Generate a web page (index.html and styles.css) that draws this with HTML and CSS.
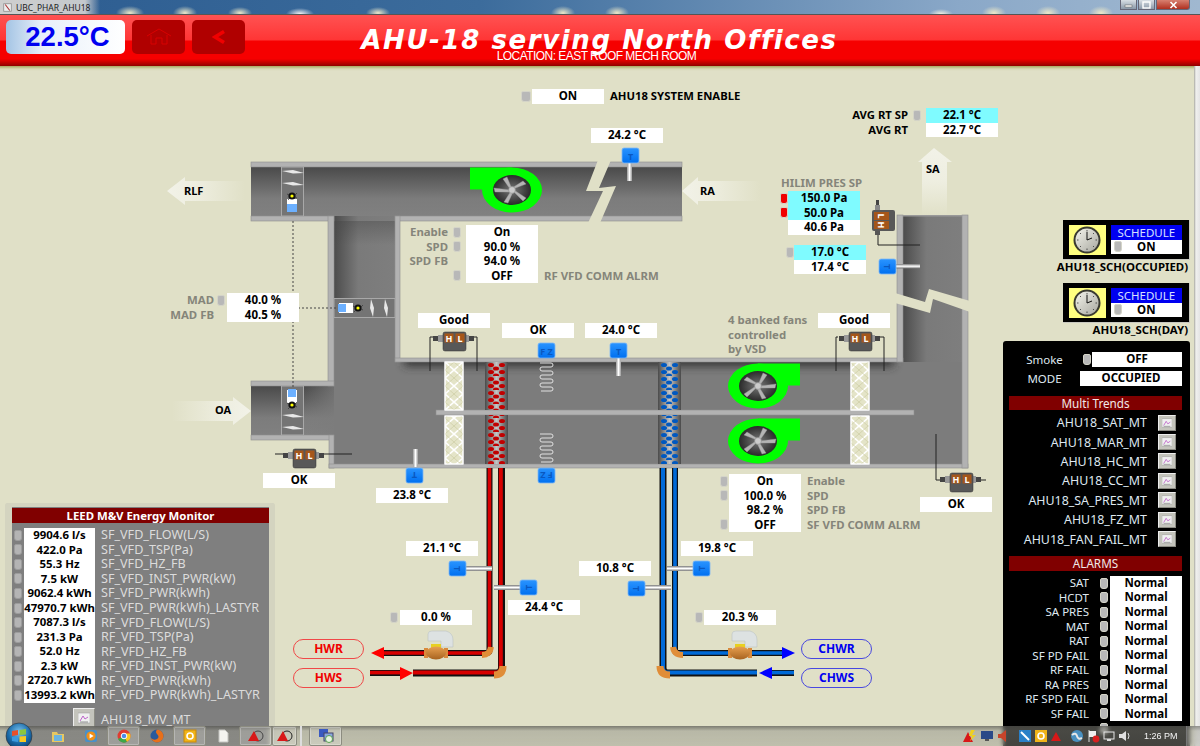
FILE: index.html
```html
<!DOCTYPE html>
<html lang="en">
<head>
    <meta charset="UTF-8">
    <title>UBC_PHAR_AHU18</title>
    <link rel="stylesheet" href="styles.css">
</head>
<body>
<div class="titlebar">
    <svg class="win-ico" viewBox="0 0 12 12"><rect x="1" y="1" width="10" height="10" fill="#eee" stroke="#888"/><path d="M3 2 L9 10" stroke="#a33" stroke-width="1.5"/></svg>
    <span>UBC_PHAR_AHU18</span>
    <div class="win-btns">
        <div class="win-btn"><svg width="9" height="7" viewBox="0 0 9 7"><rect x="1" y="4" width="7" height="2" fill="#fff" stroke="#555" stroke-width=".5"/></svg></div>
        <div class="win-btn"><svg width="9" height="8" viewBox="0 0 9 8"><rect x="1" y="1" width="7" height="6" fill="none" stroke="#fff" stroke-width="1.4"/></svg></div>
        <div class="win-btn close"><svg width="9" height="8" viewBox="0 0 9 8"><path d="M1.5 1 L7.5 7 M7.5 1 L1.5 7" stroke="#fff" stroke-width="1.6"/></svg></div>
    </div>
</div>

<div class="header">
    <div class="temp-box">22.5°C</div>
    <div class="head-btn">
        <svg width="26" height="18" viewBox="0 0 26 18"><path d="M1 8 L13 1 L25 8 M5 7 V16 H10 V10 H16 V16 H21 V7" fill="none" stroke="#d80000" stroke-width="1"/></svg>
    </div>
    <div class="head-btn">
        <svg width="14" height="14" viewBox="0 0 14 14"><path d="M12 1.5 L3 7 L12 12.5" fill="none" stroke="#f00000" stroke-width="3.5"/></svg>
    </div>
    <div class="head-title">
        <h1>AHU-18 serving North Offices</h1>
        <div class="location">LOCATION: EAST ROOF MECH ROOM</div>
    </div>
</div>

<div class="canvas">
    <svg class="plant" width="1200" height="680" viewBox="0 66 1200 680">
        <defs>
            <linearGradient id="ductTop" x1="0" y1="0" x2="0" y2="1">
                <stop offset="0" stop-color="#4a4a4a"/><stop offset=".65" stop-color="#7c7c7c"/><stop offset="1" stop-color="#808080"/>
            </linearGradient>
            <linearGradient id="ductLeft" x1="0" y1="0" x2="1" y2="0">
                <stop offset="0" stop-color="#4c4c4c"/><stop offset=".4" stop-color="#7a7a7a"/><stop offset="1" stop-color="#7e7e7e"/>
            </linearGradient>
            <linearGradient id="shadow" x1="0" y1="0" x2="0" y2="1">
                <stop offset="0" stop-color="#444" stop-opacity=".8"/><stop offset="1" stop-color="#444" stop-opacity="0"/>
            </linearGradient>
            <linearGradient id="oaFade" x1="0" y1="0" x2="1" y2="0">
                <stop offset="0" stop-color="#7c7c7c" stop-opacity="0"/><stop offset="1" stop-color="#7c7c7c"/>
            </linearGradient>
            <linearGradient id="coilBg" x1="0" y1="0" x2="1" y2="0">
                <stop offset="0" stop-color="#4a4a4a"/><stop offset=".5" stop-color="#c4c4c4"/><stop offset="1" stop-color="#4a4a4a"/>
            </linearGradient>
            <linearGradient id="blueBox" x1="0" y1="0" x2="0" y2="1">
                <stop offset="0" stop-color="#2a94ff"/><stop offset="1" stop-color="#0070f0"/>
            </linearGradient>
            <linearGradient id="stickV" x1="0" y1="0" x2="1" y2="0">
                <stop offset="0" stop-color="#999"/><stop offset=".5" stop-color="#fff"/><stop offset="1" stop-color="#999"/>
            </linearGradient>
            <linearGradient id="stickH" x1="0" y1="0" x2="0" y2="1">
                <stop offset="0" stop-color="#777"/><stop offset=".5" stop-color="#fff"/><stop offset="1" stop-color="#777"/>
            </linearGradient>
            <linearGradient id="fadeRightward" x1="0" y1="0" x2="1" y2="0">
                <stop offset="0" stop-color="#f2f2e8"/><stop offset=".35" stop-color="#eeeee0"/><stop offset="1" stop-color="#e0e0c7"/>
            </linearGradient>
            <linearGradient id="fadeLeftward" x1="1" y1="0" x2="0" y2="0">
                <stop offset="0" stop-color="#f2f2e8"/><stop offset=".35" stop-color="#eeeee0"/><stop offset="1" stop-color="#e0e0c7"/>
            </linearGradient>
            <linearGradient id="fadeDown" x1="0" y1="0" x2="0" y2="1">
                <stop offset="0" stop-color="#f2f2e8"/><stop offset=".5" stop-color="#eeeee0"/><stop offset="1" stop-color="#e0e0c7"/>
            </linearGradient>
            <radialGradient id="eye" cx=".5" cy=".5" r=".5">
                <stop offset="0" stop-color="#777"/><stop offset="1" stop-color="#2a2a2a"/>
            </radialGradient>
            <linearGradient id="brass" x1="0" y1="0" x2="0" y2="1">
                <stop offset="0" stop-color="#e8a050"/><stop offset="1" stop-color="#a86420"/>
            </linearGradient>
            <filter id="soft" x="-30%" y="-100%" width="160%" height="300%"><feGaussianBlur stdDeviation="5"/></filter>
            <pattern id="lattice" x="445" y="362" width="18" height="16" patternUnits="userSpaceOnUse">
                <path d="M0 0 L18 16 M18 0 L0 16" stroke="#fff" stroke-width="1.6"/>
                <path d="M9 0 L18 8 L9 16 L0 8 Z" fill="none" stroke="#cfcfa8" stroke-width=".8"/>
            </pattern>
            <pattern id="redTubes" x="485" y="362" width="23" height="14" patternUnits="userSpaceOnUse">
                <ellipse cx="6" cy="3" rx="3" ry="2.1" fill="#c00000"/><ellipse cx="17" cy="3" rx="3" ry="2.1" fill="#c00000"/>
                <ellipse cx="11" cy="6.5" rx="3" ry="2.1" fill="#c00000"/><ellipse cx="6" cy="10" rx="3" ry="2.1" fill="#c00000"/>
                <ellipse cx="17" cy="10" rx="3" ry="2.1" fill="#c00000"/><ellipse cx="11" cy="13.5" rx="3" ry="2.1" fill="#c00000"/>
            </pattern>
            <pattern id="blueTubes" x="658" y="362" width="23" height="14" patternUnits="userSpaceOnUse">
                <ellipse cx="6" cy="3" rx="3" ry="2.1" fill="#0058c0"/><ellipse cx="17" cy="3" rx="3" ry="2.1" fill="#0058c0"/>
                <ellipse cx="11" cy="6.5" rx="3" ry="2.1" fill="#0058c0"/><ellipse cx="6" cy="10" rx="3" ry="2.1" fill="#0058c0"/>
                <ellipse cx="17" cy="10" rx="3" ry="2.1" fill="#0058c0"/><ellipse cx="11" cy="13.5" rx="3" ry="2.1" fill="#0058c0"/>
            </pattern>
            <g id="fan">
                <rect x="0" y="-22.5" width="42" height="22" fill="#00ff00"/>
                <ellipse rx="30" ry="22.5" fill="#00ff00"/>
                <ellipse rx="19" ry="15" fill="url(#eye)"/>
                <path d="M0 -1 L5 -13 L9 -11 L2 -1 M1 0 L18 -2 L17 2 L1 2 M1 1 L8 12 L4 13 L-1 2 M-1 1 L-11 11 L-14 8 L-2 0 M-1 -1 L-14 -6 L-11 -9 L0 -2" fill="#b4b4b4" stroke="#999" stroke-width=".4"/>
                <circle r="3.4" fill="#ccc" stroke="#888" stroke-width=".6"/>
            </g>
            <g id="hl">
                <rect x="-10" y="4" width="10" height="5" fill="#444"/><rect x="23" y="4" width="8" height="5" fill="#444"/>
                <rect x="-5" y="3" width="5" height="7" fill="#999"/><rect x="23" y="3" width="3" height="7" fill="#999"/>
                <rect width="23" height="19" rx="2" fill="#585858" stroke="#333" stroke-width=".5"/>
                <rect x="1.5" y="1.5" width="9" height="9" fill="#a5561a"/><rect x="12.5" y="1.5" width="9" height="9" fill="#a5561a"/>
                <text class="hl-txt" x="6" y="9.5">H</text><text class="hl-txt" x="17" y="9.5">L</text>
            </g>
            <g id="blue"><rect width="17" height="15" rx="2" fill="url(#blueBox)" stroke="#7db8f5" stroke-width=".8"/></g>
            <g id="gear"><circle r="3.6" fill="#111"/><circle r="1.6" fill="#ff0"/><path d="M-5 -2 L-3 -1 M5 -3 L3 -1 M-4 4 L-2 2 M5 2 L3 1" stroke="#333" stroke-width=".7"/></g>
            <path id="bladeH" d="M0 -1 L11 -2 L22 1 L11 1.5 Z" fill="#e8e8e8"/>
            <path id="bladeV" d="M-1 -9 L2 0 L1 9 L-2 0 Z" fill="#e8e8e8"/>
            <g id="valve">
                <path d="M428 634 Q428 631 432 631 H446 Q453 633 453 640 V647 H441 V641 H428 Z" fill="#dde2e2" stroke="#bcc4c4" stroke-width=".6"/>
                <rect x="431" y="644" width="10" height="4" fill="#e8d020"/>
                <rect x="424" y="648" width="4" height="10" fill="#d98a3c"/><rect x="444" y="648" width="4" height="10" fill="#d98a3c"/>
                <ellipse cx="436" cy="653" rx="10" ry="6.5" fill="url(#brass)"/>
            </g>
        </defs>

        <!-- air arrows -->
        <polygon points="167,191 185,177 185,181 245,181 245,201 185,201 185,205" fill="url(#fadeRightward)"/>
        <polygon points="682,191 698,177 698,181 760,181 760,201 698,201 698,205" fill="url(#fadeRightward)"/>
        <polygon points="251,411 233,397 233,401 172,401 172,421 233,421 233,425" fill="url(#fadeLeftward)"/>
        <polygon points="934,148 952,162 947,162 947,216 922,216 922,162 918,162" fill="url(#fadeDown)"/>

        <!-- duct interior -->
        <rect x="251" y="167" width="431" height="49" fill="url(#ductTop)"/>
        <rect x="334" y="216" width="61" height="82" fill="url(#ductLeft)"/>
        <rect x="334" y="221" width="61" height="24" fill="url(#shadow)" opacity=".5"/>
        <rect x="334" y="318" width="61" height="63" fill="#7c7c7c"/>
        <rect x="251" y="386" width="94" height="49" fill="url(#ductTop)"/>
        <rect x="304" y="386" width="41" height="49" fill="url(#oaFade)"/>
        <rect x="334" y="362" width="628" height="102" fill="#7c7c7c"/>
        <rect x="334" y="386" width="11" height="78" fill="#7c7c7c"/>
        <rect x="903" y="216" width="59" height="146" fill="url(#ductLeft)"/>
        <rect x="404" y="352" width="490" height="14" fill="#333" filter="url(#soft)"/>
        <rect x="400" y="221" width="497" height="137" fill="#e0e0c7"/>

        <!-- duct walls -->
        <g fill="#b2b2b2" stroke="#8e8e8e" stroke-width=".6">
            <rect x="251" y="162" width="431" height="5"/>
            <rect x="251" y="216" width="83" height="5"/>
            <rect x="395" y="216" width="287" height="5"/>
            <rect x="328" y="216" width="6" height="170"/>
            <rect x="251" y="381" width="83" height="5"/>
            <rect x="251" y="435" width="83" height="5"/>
            <rect x="329" y="435" width="5" height="33"/>
            <rect x="329" y="464" width="639" height="4"/>
            <rect x="395" y="216" width="5" height="146"/>
            <rect x="395" y="358" width="508" height="4"/>
            <rect x="897" y="215" width="6" height="147"/>
            <rect x="962" y="215" width="6" height="253"/>
            <rect x="436" y="410" width="478" height="5"/>
        </g>
        <rect x="903" y="215" width="59" height="1.5" fill="#999"/>

        <!-- duct breaks -->
        <polygon points="598,160 611,160 599,188 616,186 600,223 588,223 603,191 586,191" fill="#e0e0c7"/>
        <polygon points="895,293 925,302 929,289 970,301 970,312 933,299 930,313 895,303" fill="#e0e0c7"/>

        <!-- dampers -->
        <g fill="#747474" stroke="#a8a8a8">
            <rect x="281.5" y="167" width="22" height="49"/>
            <rect x="281.5" y="386" width="22" height="49"/>
            <rect x="334" y="298.5" width="61" height="19"/>
        </g>
        <use href="#bladeH" x="282" y="172"/><use href="#bladeH" x="282" y="184"/>
        <use href="#bladeH" x="282" y="416"/><use href="#bladeH" x="282" y="428"/>
        <use href="#bladeV" x="372" y="308"/><use href="#bladeV" x="386" y="308"/>
        <rect x="287" y="199" width="10" height="13" fill="#fff"/><rect x="287" y="204" width="10" height="8" fill="#6cb0ff"/><use href="#gear" x="292" y="196"/>
        <rect x="287" y="390" width="10" height="13" fill="#fff"/><rect x="288" y="389" width="8" height="8" fill="#6cb0ff"/><use href="#gear" x="292" y="405"/>
        <rect x="339" y="303" width="14" height="10" fill="#fff"/><rect x="338" y="304" width="8" height="8" fill="#6cb0ff"/><use href="#gear" x="358" y="308"/>

        <!-- dashed actuator links -->
        <path d="M293 221 V389 M298 308 H336" fill="none" stroke="#444" stroke-dasharray="2 2"/>

        <!-- filters -->
        <g stroke="#fff">
            <rect x="445" y="362" width="18" height="48" fill="#e4e4c8"/><rect x="445" y="362" width="18" height="48" fill="url(#lattice)"/>
            <rect x="445" y="416" width="18" height="48" fill="#e4e4c8"/><rect x="445" y="416" width="18" height="48" fill="url(#lattice)"/>
            <rect x="851" y="362" width="18" height="48" fill="#e4e4c8"/><rect x="851" y="362" width="18" height="48" fill="url(#lattice)"/>
            <rect x="851" y="416" width="18" height="48" fill="#e4e4c8"/><rect x="851" y="416" width="18" height="48" fill="url(#lattice)"/>
        </g>

        <!-- coils -->
        <rect x="485" y="362" width="23" height="48" fill="url(#coilBg)"/><rect x="485" y="362" width="23" height="48" fill="url(#redTubes)"/>
        <rect x="485" y="415" width="23" height="49" fill="url(#coilBg)"/><rect x="485" y="415" width="23" height="49" fill="url(#redTubes)"/>
        <rect x="658" y="362" width="23" height="48" fill="url(#coilBg)"/><rect x="658" y="362" width="23" height="48" fill="url(#blueTubes)"/>
        <rect x="658" y="415" width="23" height="49" fill="url(#coilBg)"/><rect x="658" y="415" width="23" height="49" fill="url(#blueTubes)"/>

        <!-- freeze stat -->
        <path d="M540 363 H551 A2 2 0 0 1 551 367 H542 A2 2 0 0 0 542 371 H551 A2 2 0 0 1 551 375 H542 A2 2 0 0 0 542 379 H551 A2 2 0 0 1 551 383 H542 A2 2 0 0 0 542 387 H551 A2 2 0 0 1 551 391 H541" fill="none" stroke="#e0e0e0"/>
        <path d="M540 434 H551 A2 2 0 0 1 551 438 H542 A2 2 0 0 0 542 442 H551 A2 2 0 0 1 551 446 H542 A2 2 0 0 0 542 450 H551 A2 2 0 0 1 551 454 H542 A2 2 0 0 0 542 458 H551 A2 2 0 0 1 551 462 H541" fill="none" stroke="#e0e0e0"/>

        <!-- fans -->
        <use href="#fan" transform="translate(512,190) scale(-1,1)"/>
        <use href="#fan" transform="translate(758,386)"/>
        <use href="#fan" transform="translate(758,441)"/>

        <!-- temperature sensors -->
        <rect x="627" y="162" width="5" height="19" fill="url(#stickV)"/>
        <use href="#blue" x="622" y="148"/><text class="blue-txt" x="630.5" y="160">T</text>
        <rect x="616" y="358" width="5" height="18" fill="url(#stickV)"/>
        <use href="#blue" x="610" y="343"/><text class="blue-txt" x="618.5" y="355">T</text>
        <use href="#blue" x="538" y="343"/><text class="blue-txt" x="546.5" y="355">F Z</text>
        <rect x="413" y="449" width="5" height="18" fill="url(#stickV)"/>
        <use href="#blue" x="406" y="468"/><text class="blue-txt" transform="translate(414.5,472) rotate(180)">T</text>
        <use href="#blue" x="538" y="468"/><text class="blue-txt" transform="translate(546.5,472) rotate(180)">F Z</text>
        <rect x="896" y="264" width="24" height="4.5" fill="url(#stickH)"/>
        <use href="#blue" x="879" y="259"/><text class="blue-txt" transform="translate(884,266.5) rotate(90)">T</text>

        <!-- H/L sensors -->
        <path d="M878 232 V245 H920" fill="none" stroke="#222"/>
        <rect x="876" y="200" width="3" height="10" fill="#444"/><rect x="875" y="205" width="5" height="6" fill="#888"/>
        <rect x="875" y="230" width="5" height="5" fill="#555"/>
        <rect x="872" y="210" width="23" height="21" rx="2" fill="#585858"/>
        <rect x="874" y="212" width="15" height="8" fill="#a5561a"/><rect x="874" y="221" width="15" height="8" fill="#a5561a"/>
        <text class="hl-txt" transform="translate(878,216) rotate(90)">L</text><text class="hl-txt" transform="translate(878,225) rotate(90)">H</text>

        <path d="M433 337 H430 V371 M473 337 H477 V371" fill="none" stroke="#222"/>
        <use href="#hl" x="443" y="332"/>
        <path d="M838 337 H836 V371 M880 337 H884 V371" fill="none" stroke="#222"/>
        <use href="#hl" x="849" y="332"/>
        <path d="M283 454 H275 M320 454 H352" fill="none" stroke="#222"/>
        <use href="#hl" x="293" y="449"/>
        <path d="M936 434 V480 H940" fill="none" stroke="#222"/>
        <path d="M978 480 H986" fill="none" stroke="#222"/>
        <use href="#hl" x="950" y="473"/>

        <!-- hot water pipes -->
        <path d="M489.5 468 V650 Q489.5 653 486 653 H384" fill="none" stroke="#111" stroke-width="6"/>
        <path d="M489.5 468 V650 Q489.5 653 486 653 H384" fill="none" stroke="#d80000" stroke-width="3.6"/>
        <path d="M501.5 468 V668 Q501.5 673 496 673 H413" fill="none" stroke="#111" stroke-width="7"/>
        <path d="M500.8 468 V668 Q500.8 672.6 496 672.6 H413" fill="none" stroke="#d80000" stroke-width="4"/>
        <path d="M370 673 H402" stroke="#111" stroke-width="6"/><path d="M370 672.6 H402" stroke="#d80000" stroke-width="3.6"/>
        <polygon points="371,653 384,647 384,659" fill="#f00"/>
        <polygon points="413,673 400,667 400,680" fill="#f00"/>
        <path d="M491 647 Q490 655 482 655" fill="none" stroke="#e08d38" stroke-width="6"/>
        <path d="M503 666 Q503 675 494 675" fill="none" stroke="#e08d38" stroke-width="7"/>

        <!-- chilled water pipes -->
        <path d="M675 468 V650 Q675 653 679 653 H782" fill="none" stroke="#111" stroke-width="6"/>
        <path d="M675 468 V650 Q675 653 679 653 H782" fill="none" stroke="#006ad8" stroke-width="3.6"/>
        <path d="M663 468 V668 Q663 673 668 673 H757" fill="none" stroke="#111" stroke-width="7"/>
        <path d="M663 468 V668 Q663 672.6 668 672.6 H757" fill="none" stroke="#006ad8" stroke-width="4"/>
        <path d="M772 673 H794" stroke="#111" stroke-width="6"/><path d="M772 672.6 H794" stroke="#006ad8" stroke-width="3.6"/>
        <polygon points="795,653 782,647 782,659" fill="#00f"/>
        <polygon points="759,673 772,667 772,679" fill="#00f"/>
        <path d="M673 647 Q674 655 683 655" fill="none" stroke="#e08d38" stroke-width="6"/>
        <path d="M660 666 Q660 675 670 675" fill="none" stroke="#e08d38" stroke-width="7"/>

        <!-- pipe well sensors -->
        <rect x="466" y="566" width="26" height="5" fill="url(#stickH)"/>
        <use href="#blue" x="449" y="561"/><text class="blue-txt" transform="translate(454,568.5) rotate(90)">T</text>
        <rect x="494" y="585" width="26" height="5" fill="url(#stickH)"/>
        <use href="#blue" x="520" y="580"/><text class="blue-txt" transform="translate(532,587.5) rotate(-90)">T</text>
        <rect x="645" y="585" width="26" height="5" fill="url(#stickH)"/>
        <use href="#blue" x="628" y="581"/><text class="blue-txt" transform="translate(633,588.5) rotate(90)">T</text>
        <rect x="667" y="566" width="26" height="5" fill="url(#stickH)"/>
        <use href="#blue" x="693" y="561"/><text class="blue-txt" transform="translate(705,568.5) rotate(-90)">T</text>

        <!-- valves -->
        <use href="#valve"/>
        <use href="#valve" x="304"/>
    </svg>

    <!-- readings on the plant drawing -->
    <div class="node n-sys rowline"><i class="led"></i><b class="val">ON</b><span class="tag-dark">AHU18 SYSTEM ENABLE</span></div>

    <div class="node n-avg readout">
        <span class="tag-dark right">AVG RT SP</span><i class="led"></i><b class="val sp">22.1 °C</b>
        <span class="tag-dark right">AVG RT</span><i></i><b class="val">22.7 °C</b>
    </div>

    <b class="node val n-rat">24.2 °C</b>
    <span class="node arrow-tag n-rlf">RLF</span>
    <span class="node arrow-tag n-ra">RA</span>
    <span class="node arrow-tag n-oa">OA</span>
    <span class="node arrow-tag n-sa">SA</span>

    <div class="node n-hilim">
        <div class="tag-gray">HILIM PRES SP</div>
        <div class="readout-led">
            <i class="led alarm"></i><b class="val sp">150.0 Pa</b>
            <i class="led alarm"></i><b class="val sp">50.0 Pa</b>
            <i></i><b class="val">40.6 Pa</b>
        </div>
    </div>

    <div class="node n-sat readout-led">
        <i class="led"></i><b class="val sp">17.0 °C</b>
        <i></i><b class="val">17.4 °C</b>
    </div>

    <div class="node n-rf readout-vfd">
        <span class="tag-gray right">Enable</span><i class="led"></i><b class="val">On</b><span></span>
        <span class="tag-gray right">SPD</span><i class="led"></i><b class="val">90.0 %</b><span></span>
        <span class="tag-gray right">SPD FB</span><i></i><b class="val">94.0 %</b><span></span>
        <span></span><i class="led"></i><b class="val">OFF</b><span class="tag-gray">RF VFD COMM ALRM</span>
    </div>

    <div class="node n-sf readout-sf">
        <i class="led"></i><b class="val">On</b><span class="tag-gray">Enable</span>
        <i class="led"></i><b class="val">100.0 %</b><span class="tag-gray">SPD</span>
        <i></i><b class="val">98.2 %</b><span class="tag-gray">SPD FB</span>
        <i class="led"></i><b class="val">OFF</b><span class="tag-gray">SF VFD COMM ALRM</span>
    </div>

    <div class="node n-mad readout-mad">
        <span class="tag-gray right">MAD</span><i class="led"></i><b class="val">40.0 %</b>
        <span class="tag-gray right">MAD FB</span><i></i><b class="val">40.5 %</b>
    </div>

    <b class="node val n-good1">Good</b>
    <b class="node val n-ok1">OK</b>
    <b class="node val n-mat">24.0 °C</b>
    <b class="node val n-good2">Good</b>
    <b class="node val n-ok2">OK</b>
    <b class="node val n-ok3">OK</b>
    <b class="node val n-t238">23.8 °C</b>
    <b class="node val n-t211">21.1 °C</b>
    <b class="node val n-t244">24.4 °C</b>
    <b class="node val n-t108">10.8 °C</b>
    <b class="node val n-t198">19.8 °C</b>
    <div class="node n-hv rowline"><i class="led"></i><b class="val">0.0 %</b></div>
    <div class="node n-cv rowline"><i class="led"></i><b class="val">20.3 %</b></div>
    <div class="node tag-gray n-note">4 banked fans<br>controlled<br>by VSD</div>

    <div class="node pill hot n-hwr">HWR</div>
    <div class="node pill hot n-hws">HWS</div>
    <div class="node pill cold n-chwr">CHWR</div>
    <div class="node pill cold n-chws">CHWS</div>

    <!-- left panel -->
    <div class="leed">
        <div class="band">LEED M&amp;V Energy Monitor</div>
        <div class="leed-rows">
            <i class="led"></i><b class="val">9904.6 l/s</b><span>SF_VFD_FLOW(L/S)</span>
            <i class="led"></i><b class="val">422.0 Pa</b><span>SF_VFD_TSP(Pa)</span>
            <i class="led"></i><b class="val">55.3 Hz</b><span>SF_VFD_HZ_FB</span>
            <i class="led"></i><b class="val">7.5 kW</b><span>SF_VFD_INST_PWR(kW)</span>
            <i class="led"></i><b class="val">9062.4 kWh</b><span>SF_VFD_PWR(kWh)</span>
            <i class="led"></i><b class="val">47970.7 kWh</b><span>SF_VFD_PWR(kWh)_LASTYR</span>
            <i class="led"></i><b class="val">7087.3 l/s</b><span>RF_VFD_FLOW(L/S)</span>
            <i class="led"></i><b class="val">231.3 Pa</b><span>RF_VFD_TSP(Pa)</span>
            <i class="led"></i><b class="val">52.0 Hz</b><span>RF_VFD_HZ_FB</span>
            <i class="led"></i><b class="val">2.3 kW</b><span>RF_VFD_INST_PWR(kW)</span>
            <i class="led"></i><b class="val">2720.7 kWh</b><span>RF_VFD_PWR(kWh)</span>
            <i class="led"></i><b class="val">13993.2 kWh</b><span>RF_VFD_PWR(kWh)_LASTYR</span>
        </div>
        <div class="leed-trend">
            <button class="trend wide"><svg viewBox="0 0 12 10"><use href="#miniChart"/></svg></button>
            <span>AHU18_MV_MT</span>
        </div>
    </div>

    <!-- right column -->
    <div class="side">
        <div class="sched">
            <div class="clock"><svg width="30" height="28" viewBox="0 0 30 28"><use href="#clockFace"/></svg></div>
            <div class="sched-col">
                <div class="sched-title">SCHEDULE</div>
                <div class="sched-state"><i class="led"></i><b>ON</b></div>
            </div>
        </div>
        <div class="sched-label">AHU18_SCH(OCCUPIED)</div>
        <div class="sched">
            <div class="clock"><svg width="30" height="28" viewBox="0 0 30 28"><use href="#clockFace"/></svg></div>
            <div class="sched-col">
                <div class="sched-title">SCHEDULE</div>
                <div class="sched-state"><i class="led"></i><b>ON</b></div>
            </div>
        </div>
        <div class="sched-label">AHU18_SCH(DAY)</div>

        <div class="blackboard">
            <div class="mode-row"><span>Smoke</span><i class="led"></i><b class="val fill">OFF</b></div>
            <div class="mode-row"><span>MODE</span><b class="val fill">OCCUPIED</b></div>

            <div class="band thin">Multi Trends</div>
            <div class="trend-row"><span>AHU18_SAT_MT</span><button class="trend"><svg viewBox="0 0 12 10"><use href="#miniChart"/></svg></button></div>
            <div class="trend-row"><span>AHU18_MAR_MT</span><button class="trend"><svg viewBox="0 0 12 10"><use href="#miniChart"/></svg></button></div>
            <div class="trend-row"><span>AHU18_HC_MT</span><button class="trend"><svg viewBox="0 0 12 10"><use href="#miniChart"/></svg></button></div>
            <div class="trend-row"><span>AHU18_CC_MT</span><button class="trend"><svg viewBox="0 0 12 10"><use href="#miniChart"/></svg></button></div>
            <div class="trend-row"><span>AHU18_SA_PRES_MT</span><button class="trend"><svg viewBox="0 0 12 10"><use href="#miniChart"/></svg></button></div>
            <div class="trend-row"><span>AHU18_FZ_MT</span><button class="trend"><svg viewBox="0 0 12 10"><use href="#miniChart"/></svg></button></div>
            <div class="trend-row"><span>AHU18_FAN_FAIL_MT</span><button class="trend"><svg viewBox="0 0 12 10"><use href="#miniChart"/></svg></button></div>

            <div class="band alarms-band">ALARMS</div>
            <div class="alarms">
                <span>SAT</span><i class="led"></i><b class="val">Normal</b>
                <span>HCDT</span><i class="led"></i><b class="val">Normal</b>
                <span>SA PRES</span><i class="led"></i><b class="val">Normal</b>
                <span>MAT</span><i class="led"></i><b class="val">Normal</b>
                <span>RAT</span><i class="led"></i><b class="val">Normal</b>
                <span>SF PD FAIL</span><i class="led"></i><b class="val">Normal</b>
                <span>RF FAIL</span><i class="led"></i><b class="val">Normal</b>
                <span>RA PRES</span><i class="led"></i><b class="val">Normal</b>
                <span>RF SPD FAIL</span><i class="led"></i><b class="val">Normal</b>
                <span>SF FAIL</span><i class="led"></i><b class="val">Normal</b>
                <span></span><i class="led"></i><i></i>
            </div>
        </div>
    </div>

    <div class="edge"></div>

    <div class="taskbar">
        <svg class="orb" width="28" height="28" viewBox="0 0 28 28">
            <defs><radialGradient id="orbG" cx=".5" cy=".35" r=".7"><stop offset="0" stop-color="#7cc4f0"/><stop offset=".6" stop-color="#1a6aa8"/><stop offset="1" stop-color="#0c3a66"/></radialGradient></defs>
            <circle cx="14" cy="14" r="13" fill="url(#orbG)" stroke="#333" stroke-width=".6"/>
            <path d="M7 9 L13 8 V13 L7 14 Z" fill="#e8502a"/><path d="M14.5 8 L21 7 V12.5 L14.5 13 Z" fill="#8cc63f"/>
            <path d="M7 15 L13 14.5 V20 L7 19 Z" fill="#3a9ae0"/><path d="M14.5 14.5 L21 14 V20 L14.5 20 Z" fill="#f8c820"/>
        </svg>
        <div class="slot"><svg width="14" height="14" viewBox="0 0 14 14"><path d="M1 3 H6 L7 5 H13 V13 H1 Z" fill="#e8c860"/><rect x="3" y="6" width="8" height="6" fill="#6cb4e0"/></svg></div>
        <div class="slot"><svg width="14" height="14" viewBox="0 0 14 14"><rect x="1" y="1" width="12" height="12" rx="2" fill="#4a90c8"/><circle cx="7" cy="7" r="4.6" fill="#f09018"/><path d="M5.6 4.6 L9.6 7 L5.6 9.4 Z" fill="#fff"/></svg></div>
        <div class="slot btn"><svg width="14" height="14" viewBox="0 0 14 14"><circle cx="7" cy="7" r="6.5" fill="#e03c30"/><path d="M7 7 L1 10 A6.5 6.5 0 0 0 10 12.8 Z" fill="#3aa848"/><path d="M7 7 L10 12.8 A6.5 6.5 0 0 0 13 4.5 L7 4.5 Z" fill="#f8c820"/><circle cx="7" cy="7" r="2.8" fill="#4a8ce8" stroke="#fff"/></svg></div>
        <div class="slot"><svg width="14" height="14" viewBox="0 0 14 14"><circle cx="7" cy="7" r="6.5" fill="#2a5a9c"/><path d="M7 .5 A6.5 6.5 0 1 1 .8 9 Q4 12 7 10 Q10 8 7 5 Q5 3 7 .5" fill="#e8701a"/></svg></div>
        <div class="slot btn"><svg width="14" height="14" viewBox="0 0 14 14"><rect x="1" y="1" width="12" height="12" fill="#f0b418" stroke="#c88808"/><circle cx="7" cy="7" r="3" fill="none" stroke="#fff" stroke-width="1.6"/></svg></div>
        <div class="slot"><svg width="12" height="14" viewBox="0 0 12 14"><path d="M2 1 H8 L11 4 V13 H2 Z" fill="#f4f4f0" stroke="#c4c4c0"/></svg></div>
        <div class="slot btn"><svg width="18" height="14" viewBox="0 0 18 14"><circle cx="11" cy="7" r="5" fill="none" stroke="#444"/><path d="M1 12 L7 2 L12 12 Z" fill="#d81818"/></svg></div>
        <div class="slot btn narrow"><svg width="18" height="14" viewBox="0 0 18 14"><circle cx="11" cy="7" r="5" fill="none" stroke="#222"/><path d="M1 12 L7 2 L12 12 Z" fill="#d81818"/></svg></div>
        <div class="slot-sep"></div>
        <div class="slot btn"><svg width="16" height="16" viewBox="0 0 16 16"><rect x="1" y="1" width="9" height="8" fill="#3a5ac0"/><rect x="6" y="5" width="9" height="8" fill="#8aa8e0" stroke="#446"/><circle cx="11" cy="11" r="3.5" fill="#e8f4e0" stroke="#58a050"/></svg></div>

        <div class="tray">
            <svg width="16" height="14" viewBox="0 0 16 14"><path d="M1 13 L6 3 L11 13 Z" fill="#d81818"/><path d="M9 1 L13 1 L10 6 L14 6 L8 12 L10 7 L7 7 Z" fill="#f0d020"/></svg>
            <svg width="14" height="14" viewBox="0 0 14 14"><rect x="1" y="2" width="12" height="8" fill="#2a4a88"/><rect x="5" y="10" width="4" height="2" fill="#555"/></svg>
            <svg width="14" height="14" viewBox="0 0 14 14"><path d="M2 5 H5 L10 1 V13 L5 9 H2 Z" fill="#c8442a"/></svg>
            <svg class="gap" width="14" height="14" viewBox="0 0 14 14"><rect x="1" y="1" width="12" height="12" fill="#2a80c8"/><path d="M3 3 L11 11" stroke="#fff" stroke-width="2"/></svg>
            <svg width="14" height="14" viewBox="0 0 14 14"><rect x="1" y="1" width="12" height="12" fill="#f0b418"/><circle cx="7" cy="7" r="3" fill="none" stroke="#fff" stroke-width="1.6"/></svg>
            <svg width="12" height="12" viewBox="0 0 12 12"><path d="M1 11 L6 2 L11 11 Z" fill="#d81818"/></svg>
            <svg class="gap" width="14" height="14" viewBox="0 0 14 14"><circle cx="7" cy="7" r="6" fill="#4a90c0"/><path d="M2 6 Q6 3 7 7 Q8 11 12 9" fill="none" stroke="#e8e8e8" stroke-width="2"/></svg>
            <svg width="14" height="14" viewBox="0 0 14 14"><path d="M3 1 V13" stroke="#ddd"/><path d="M3 2 H10 V8 H3 Z" fill="#f0f0f0"/><circle cx="10" cy="10" r="3.4" fill="#d82020"/></svg>
            <svg width="14" height="14" viewBox="0 0 14 14"><rect x="2" y="3" width="10" height="7" fill="none" stroke="#e8e8e8"/><rect x="5" y="10" width="4" height="2" fill="#ddd"/></svg>
            <svg width="14" height="14" viewBox="0 0 14 14"><path d="M1 5 H4 L8 2 V12 L4 9 H1 Z" fill="#e0e0e0"/><path d="M10 4 Q12 7 10 10" fill="none" stroke="#ddd"/></svg>
            <span class="clock-text">1:26 PM</span>
            <div class="show-desk"></div>
        </div>
    </div>
</div>

<svg class="shared" width="0" height="0">
    <defs>
        <linearGradient id="faceG" x1="0" y1="0" x2="1" y2="1">
            <stop offset="0" stop-color="#f4f4ec"/><stop offset="1" stop-color="#a8a8a0"/>
        </linearGradient>
        <g id="miniChart">
            <rect width="12" height="10" fill="#f0f0f0" stroke="#999" stroke-width=".5"/>
            <path d="M2 8 L5 3 L7 6 L10 4" fill="none" stroke="#b040c0" stroke-width=".8"/>
            <path d="M2 9 H10" stroke="#555" stroke-width=".6"/>
        </g>
        <g id="clockFace">
            <circle cx="15" cy="14" r="13.5" fill="#3a3a30"/>
            <circle cx="15" cy="14" r="11.5" fill="url(#faceG)"/>
            <path d="M15 14 V6 M15 14 L20 12" stroke="#111" stroke-width="1"/>
            <path d="M15 4 V5.5 M15 22.5 V24 M5 14 H6.5 M23.5 14 H25 M8 7 L9 8 M22 7 L21 8 M8 21 L9 20 M22 21 L21 20" stroke="#333" stroke-width=".8"/>
        </g>
    </defs>
</svg>
</body>
</html>
```

FILE: styles.css
```css
* {
    box-sizing: border-box;
}

html, body {
    margin: 0;
    height: 746px;
    overflow: hidden;
}

body {
    display: flex;
    flex-direction: column;
    font-family: "Noto Sans", "Open Sans", sans-serif;
    background: #e0e0c7;
    color: #000;
}

.titlebar {
    height: 15px;
    display: flex;
    align-items: center;
    gap: 4px;
    padding-left: 3px;
    font-size: 8.5px;
    color: #222;
    border-bottom: 1px solid #555;
    background:
        radial-gradient(ellipse 14px 7px at 130px 13px, #ece8c8, transparent),
        radial-gradient(ellipse 12px 7px at 185px 13px, #ece8c8, transparent),
        radial-gradient(ellipse 12px 6px at 240px 13px, #ece8c8, transparent),
        radial-gradient(ellipse 14px 6px at 300px 14px, #f4f4f4, transparent),
        radial-gradient(ellipse 12px 6px at 378px 13px, #ece8c8, transparent),
        radial-gradient(ellipse 12px 7px at 563px 13px, #ece8c8, transparent),
        radial-gradient(ellipse 12px 7px at 617px 13px, #ece8c8, transparent),
        radial-gradient(ellipse 12px 5px at 941px 14px, #f0f0e0, transparent),
        radial-gradient(ellipse 12px 7px at 994px 13px, #ece8c8, transparent),
        radial-gradient(ellipse 12px 7px at 1048px 13px, #ece8c8, transparent),
        radial-gradient(ellipse 12px 7px at 1101px 13px, #ece8c8, transparent),
        linear-gradient(to right, #cfcfcf 0, #c4c8cc 85px, rgba(60, 106, 155, 0) 100px),
        linear-gradient(to right, #2c5c90, #3c6c9c 40%, #8aa8c8 80%, #a0b8d0);
}

.win-ico {
    width: 9px;
    height: 11px;
}

.win-btns {
    margin-left: auto;
    margin-right: 10px;
    display: flex;
    align-self: flex-start;
    gap: 1px;
}

.win-btn {
    width: 17px;
    height: 10px;
    display: flex;
    align-items: center;
    justify-content: center;
    background: linear-gradient(#d8dee4, #8a98a8);
    border: 1px solid #667;
    border-top: 0;
}

.win-btn.close {
    width: 34px;
    background: linear-gradient(#d88070, #b03020);
    border-radius: 0 0 3px 0;
}

.header {
    height: 51px;
    display: flex;
    gap: 7px;
    padding: 5px 0 0 6px;
    background: linear-gradient(#ff5252 0, #ff3636 48%, #f60000 52%, #f60000 86%, #a00000 98%, #8a0000 100%);
}

.temp-box {
    width: 119px;
    height: 34px;
    padding-left: 4px;
    border-radius: 5px;
    background: linear-gradient(to right, #a4c4e4, #e8f0fa 30%, #fff);
    color: #0000f0;
    font-family: "Liberation Sans", sans-serif;
    font-weight: 700;
    font-size: 27.5px;
    line-height: 34px;
    text-align: center;
}

.head-btn {
    width: 53px;
    height: 34px;
    border-radius: 5px;
    background: #b00000;
    display: flex;
    align-items: center;
    justify-content: center;
}

.head-title {
    flex: 1;
    margin-right: 253px;
    text-align: center;
    color: #fff;
}

.head-title h1 {
    margin: 9px 0 0;
    font-family: "DejaVu Sans", sans-serif;
    font-style: italic;
    font-weight: 700;
    font-size: 26px;
    line-height: 22px;
    letter-spacing: 1.6px;
}

.location {
    margin-right: 6px;
    font-family: "Liberation Sans", sans-serif;
    font-size: 12px;
    line-height: 10px;
    letter-spacing: -.55px;
}

.canvas {
    position: relative;
    flex: 1;
    min-height: 0;
    overflow: hidden;
    display: flex;
    justify-content: space-between;
    padding: 0 10px 0 5px;
    background: linear-gradient(#a8a860 0, #d8d8b8 3px, #e0e0c7 5px);
}

.plant {
    position: absolute;
    left: 0;
    top: 0;
}

.shared {
    position: absolute;
}

.node {
    position: absolute;
}

.val {
    display: block;
    width: 72px;
    height: 14.5px;
    line-height: 14.5px;
    background: #fff;
    color: #000;
    text-align: center;
    font-weight: 700;
    font-size: 11.5px;
    white-space: nowrap;
}

.val.sp {
    background: #7ffbff;
}

.led {
    display: block;
    width: 8px;
    height: 11px;
    background: #b8b8b8;
    border: 1px solid #d4d4c8;
    border-radius: 2px 2px 3px 3px;
}

.led.alarm {
    background: #f00000;
}

.tag-dark {
    font-weight: 700;
    font-size: 11.3px;
    line-height: 14.5px;
    white-space: nowrap;
}

.tag-gray {
    font-weight: 700;
    font-size: 11.4px;
    line-height: 14.5px;
    color: #85857a;
    white-space: nowrap;
}

.right {
    text-align: right;
}

.rowline {
    display: flex;
    align-items: center;
}

/* readout blocks, columns are what differ */
.readout, .readout-led, .readout-vfd, .readout-sf, .readout-mad {
    display: grid;
    align-items: center;
    justify-items: center;
}

.readout span, .readout-vfd span, .readout-mad span {
    justify-self: stretch;
}

.readout {
    grid-template-columns: 57px 18px 72px;
}

.readout-led {
    grid-template-columns: 9px 72px;
}

.readout-vfd {
    grid-template-columns: 43px 18px 72px auto;
}

.readout-vfd > span:nth-child(4n) {
    padding-left: 6px;
}

.readout-sf {
    grid-template-columns: 11px 72px auto;
}

.readout-sf > span {
    justify-self: start;
    padding-left: 6px;
}

.readout-mad {
    grid-template-columns: 44px 13px 72px;
}

.n-sys { left: 521px; top: 23px; }
.n-sys .led { width: 10px; margin-right: 1px; }
.n-sys .tag-dark { margin-left: 6px; }
.n-avg { left: 851px; top: 42px; }
.n-rat { left: 591px; top: 62px; }
.n-rlf { left: 184px; top: 117px; }
.n-ra { left: 700px; top: 117px; }
.n-oa { left: 215px; top: 336px; }
.n-sa { left: 926px; top: 95px; }
.n-hilim { left: 779px; top: 110px; }
.n-hilim .tag-gray { margin-left: 2px; height: 15px; }
.n-sat { left: 785px; top: 179px; }
.n-rf { left: 405px; top: 159px; }
.n-sf { left: 718px; top: 408px; }
.n-mad { left: 170px; top: 227px; }
.n-good1 { left: 418px; top: 247px; }
.n-ok1 { left: 502px; top: 257px; }
.n-mat { left: 585px; top: 257px; }
.n-good2 { left: 818px; top: 247px; }
.n-ok2 { left: 263px; top: 407px; }
.n-ok3 { left: 920px; top: 431px; }
.n-t238 { left: 376px; top: 422px; }
.n-t211 { left: 406px; top: 475px; }
.n-t244 { left: 508px; top: 534px; }
.n-t108 { left: 579px; top: 495px; }
.n-t198 { left: 681px; top: 475px; }
.n-hv { left: 390px; top: 544px; }
.n-hv .led { margin-right: 2px; }
.n-cv { left: 695px; top: 544px; }
.n-cv .led { margin-right: 1px; }
.n-note { left: 728px; top: 247px; }
.n-hwr { left: 293px; top: 573px; }
.n-hws { left: 293px; top: 602px; }
.n-chwr { left: 801px; top: 573px; }
.n-chws { left: 801px; top: 602px; }

.arrow-tag {
    font-weight: 700;
    font-size: 11px;
    line-height: 15px;
}

.pill {
    width: 71px;
    height: 20px;
    border-radius: 10px;
    background: transparent;
    font-weight: 700;
    font-size: 12px;
    line-height: 18px;
    text-align: center;
}

.pill.hot {
    border: 1px solid #f04848;
    color: #f00000;
}

.pill.cold {
    border: 1px solid #4848e0;
    color: #0000f0;
}

.hl-txt {
    font-family: "Noto Sans", sans-serif;
    font-size: 9px;
    font-weight: 700;
    fill: #fff;
    text-anchor: middle;
}

.blue-txt {
    font-family: "Noto Sans", sans-serif;
    font-size: 9px;
    font-weight: 700;
    fill: #0a58c0;
    text-anchor: middle;
}

/* LEED panel */
.leed {
    position: relative;
    align-self: flex-end;
    width: 270px;
    height: 243px;
    padding-top: 1px;
    background: #7f7f7f;
    border: solid #d4d4c0;
    border-width: 4px 6px 0 7px;
    border-radius: 3px 3px 0 0;
}

.band {
    height: 15px;
    line-height: 15px;
    background: #800000;
    color: #f0e8e8;
    text-align: center;
    font-size: 11.7px;
}

.leed .band {
    font-size: 11.4px;
    font-weight: 700;
    color: #fff;
}

.leed-rows {
    display: grid;
    grid-template-columns: 12px 71px auto;
    grid-auto-rows: 14.55px;
    align-items: center;
    margin-top: 5px;
    color: #dcdcdc;
    font-size: 12.6px;
    line-height: 14px;
}

.leed-rows .led {
    justify-self: center;
    background: #b4b4b4;
    border-color: #9c9c9c;
}

.leed-rows .val {
    width: 71px;
    height: 14.55px;
    line-height: 14.55px;
    font-size: 11.4px;
}

.leed-rows span {
    padding-left: 6px;
    white-space: nowrap;
}

.leed-trend {
    display: flex;
    align-items: flex-start;
    margin-top: 5px;
    margin-left: 61px;
    color: #dcdcdc;
    font-size: 12.6px;
}

.leed-trend span {
    padding: 3px 0 0 6px;
}

.trend {
    width: 18px;
    height: 16px;
    padding: 2px 3px;
    background: #c4c4bc;
    border: 1px solid #8c8c84;
    border-top-color: #eee;
    border-left-color: #eee;
    display: flex;
}

.trend.wide {
    width: 22px;
    height: 20px;
    padding: 3px 4px;
}

.trend svg {
    width: 100%;
    height: 100%;
}

/* right column */
.side {
    position: relative;
    width: 187px;
    margin-top: 154px;
    display: flex;
    flex-direction: column;
    align-items: flex-end;
}

.sched {
    width: 127px;
    height: 40px;
    padding: 5px 7px 5px 6px;
    display: flex;
    gap: 5px;
    background: #000;
    border: 1px solid #c8c8c0;
    border-width: 0 1px 1px 0;
}

.clock {
    width: 37px;
    height: 30px;
    background: #ffff80;
    display: flex;
    align-items: center;
    justify-content: center;
}

.sched-col {
    width: 72px;
}

.sched-title {
    height: 15px;
    line-height: 15px;
    background: #0000f0;
    color: #d8e0ff;
    text-align: center;
    font-size: 11.5px;
}

.sched-state {
    position: relative;
    height: 14px;
    line-height: 14px;
    background: #fff;
    text-align: center;
    font-size: 11.5px;
}

.sched-state .led {
    position: absolute;
    left: 3px;
    top: 1px;
}

.sched-label {
    height: 14px;
    line-height: 14px;
    margin-right: 2px;
    margin-bottom: 9px;
    font-weight: 700;
    font-size: 11.4px;
    white-space: nowrap;
}

.blackboard {
    flex: 1;
    width: 187px;
    margin-top: -5px;
    padding: 11px 8px 0 6px;
    background: #000;
    border-radius: 3px 3px 0 0;
    color: #dfe8f0;
    font-size: 11.5px;
}

.mode-row {
    display: flex;
    align-items: center;
    height: 15px;
    margin-bottom: 4px;
}

.mode-row span {
    width: 71px;
    text-align: center;
}

.mode-row .led {
    margin-left: 3px;
    margin-right: 1px;
}

.mode-row .val.fill {
    flex: 1;
    width: auto;
    height: 15px;
}

.band.thin {
    margin-top: 10px;
    height: 14px;
    line-height: 14px;
}

.trend-row {
    height: 19.4px;
    display: flex;
    align-items: center;
    justify-content: flex-end;
    gap: 11px;
    padding-right: 6px;
    white-space: nowrap;
    font-size: 12.4px;
}

.band.thin + .trend-row {
    margin-top: 3px;
}

.alarms-band {
    margin-top: 7px;
}

.alarms {
    display: grid;
    grid-template-columns: 80px 21px 72px;
    grid-auto-rows: 14.55px;
    align-items: center;
    margin-top: 5px;
    line-height: 14px;
}

.alarms span {
    text-align: right;
    white-space: nowrap;
}

.alarms .led {
    justify-self: end;
    margin-right: 2px;
}

.alarms .val {
    height: 14.55px;
    line-height: 14.55px;
}

.edge {
    position: absolute;
    right: 0;
    top: 0;
    bottom: 0;
    width: 6px;
    background: linear-gradient(to right, #a8a8a0, #f0f0ee 2px, #e4e4e4);
}

/* windows taskbar lies over the page */
.taskbar {
    position: absolute;
    left: 0;
    bottom: 0;
    width: 1200px;
    height: 20px;
    display: flex;
    align-items: center;
    padding-left: 41px;
    background: linear-gradient(rgba(90, 90, 84, .75), rgba(145, 145, 135, .5) 25%, rgba(150, 150, 140, .45));
    backdrop-filter: blur(2px);
}

.orb {
    position: absolute;
    left: 5px;
    bottom: -4px;
}

.slot {
    width: 33px;
    height: 20px;
    flex: none;
    display: flex;
    align-items: center;
    justify-content: center;
}

.slot.btn {
    border: 1px solid #8c8c80;
    border-radius: 2px;
    background: rgba(255, 255, 255, .18);
    box-shadow: inset 0 0 0 1px rgba(255, 255, 255, .25);
}

.slot.narrow {
    width: 25px;
}

.slot-sep {
    width: 9px;
    height: 20px;
    flex: none;
    border-left: 2px solid #ddd;
    margin-left: 3px;
}

.tray {
    margin-left: auto;
    display: flex;
    align-items: center;
    gap: 2px;
    height: 20px;
}

.tray .gap {
    margin-left: 6px;
}

.clock-text {
    margin-left: 10px;
    width: 32px;
    color: #f4f4f4;
    font-family: "Liberation Sans", sans-serif;
    font-size: 9px;
    white-space: nowrap;
}

.show-desk {
    width: 14px;
    height: 20px;
    margin-left: 8px;
    border-left: 1px solid #777;
    background: rgba(255, 255, 255, .15);
}
```
